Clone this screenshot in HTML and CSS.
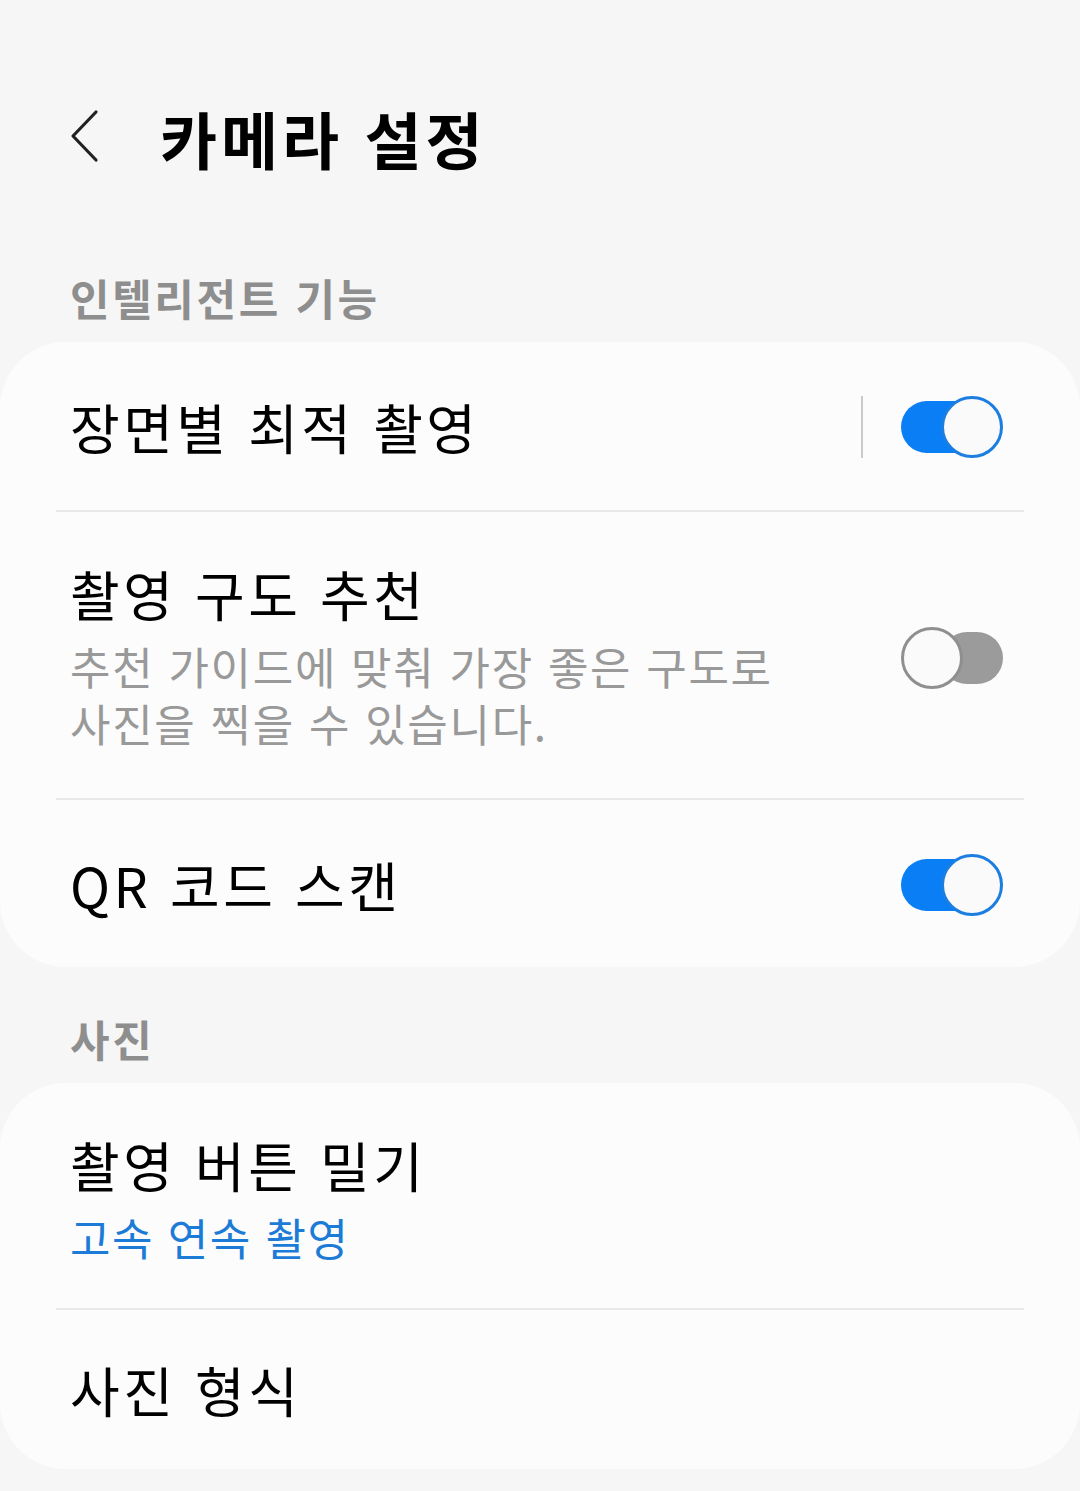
FILE: index.html
```html
<!DOCTYPE html>
<html lang="ko">
<head>
  <meta charset="UTF-8">
  <title>카메라 설정</title>
  <link rel="stylesheet" href="styles.css">
</head>
<body>
  <header class="topbar">
    <svg class="back" width="40" height="60" viewBox="0 0 40 60">
      <polyline points="28,4 5,28 28,52" fill="none" stroke="#222" stroke-width="3.2" stroke-linecap="round" stroke-linejoin="round"/>
    </svg>
    <h1>카메라 설정</h1>
  </header>

  <div class="section-label">인텔리전트 기능</div>
  <div class="card">
    <div class="row">
      <div class="text">
        <div class="title">장면별 최적 촬영</div>
      </div>
      <span class="vline"></span>
      <span class="switch on"><span class="knob"></span></span>
    </div>
    <div class="sep"></div>
    <div class="row tall">
      <div class="text">
        <div class="title">촬영 구도 추천</div>
        <div class="sub">추천 가이드에 맞춰 가장 좋은 구도로<br>사진을 찍을 수 있습니다.</div>
      </div>
      <span class="switch off"><span class="knob"></span></span>
    </div>
    <div class="sep"></div>
    <div class="row end">
      <div class="text">
        <div class="title">QR 코드 스캔</div>
      </div>
      <span class="switch on"><span class="knob"></span></span>
    </div>
  </div>

  <div class="section-label">사진</div>
  <div class="card">
    <div class="row tall short">
      <div class="text">
        <div class="title">촬영 버튼 밀기</div>
        <div class="sub blue">고속 연속 촬영</div>
      </div>
    </div>
    <div class="sep"></div>
    <div class="row last">
      <div class="text">
        <div class="title">사진 형식</div>
      </div>
    </div>
  </div>
</body>
</html>
```

FILE: styles.css
```css
/* Global settings */
* { box-sizing: border-box; }
body {
  margin: 0;
  background: #f6f6f6;
  font-family: "Noto Sans CJK KR", "Noto Sans", sans-serif;
  color: #000;
}

/* Top bar */
.topbar {
  height: 226px;
  padding: 50px 0 0 68px;
  display: flex;
  align-items: center;
}
.back { display: block; }
.topbar h1 {
  margin: 0 0 0 52px;
  font-size: 62px;
  font-weight: 700;
  line-height: 70px;
  letter-spacing: 4px;
}

/* Section headers */
.section-label {
  padding: 46px 70px 20px;
  font-size: 43px;
  line-height: 50px;
  font-weight: 700;
  letter-spacing: 2.6px;
  color: #8e8e8e;
}

/* Cards */
.card {
  background: #fcfcfc;
  border-radius: 66px;
}
.row {
  display: flex;
  align-items: center;
  padding: 54px 77px 52px 70px;
}
.row.tall { padding: 52px 77px 46px 70px; }
.row.tall.short { padding-bottom: 42px; }
.row.end { padding-bottom: 51px; }
.row.last { padding: 50px 77px 49px 70px; }
.text { flex: 1; }
.title {
  font-size: 54px;
  line-height: 60px;
  letter-spacing: 3.5px;
}
.sub {
  margin-top: 14px;
  font-size: 44px;
  line-height: 57px;
  letter-spacing: 1.7px;
  color: #999;
}
.sub.blue { color: #1b7bd6; letter-spacing: 1.5px; }
.sep {
  height: 2px;
  margin: 0 56px;
  background: #e8e8e8;
}

/* Switches */
.vline {
  width: 2px;
  height: 62px;
  background: #cacaca;
  margin-right: 38px;
}
.switch {
  position: relative;
  width: 102px;
  height: 62px;
}
.switch:before {
  content: "";
  position: absolute;
  top: 5px;
  height: 52px;
  border-radius: 26px;
}
.switch.on:before { left: 0; right: 20px; background: #0a7ef5; }
.switch.off:before { left: 40px; right: 0; background: #9b9b9b; }
.knob {
  position: absolute;
  top: 0;
  width: 62px;
  height: 62px;
  border-radius: 50%;
  background: #fafafa;
  border: 3px solid #1b7ee0;
}
.switch.on .knob { right: 0; }
.switch.off .knob { left: 0; border-color: #8f8f8f; }
```
